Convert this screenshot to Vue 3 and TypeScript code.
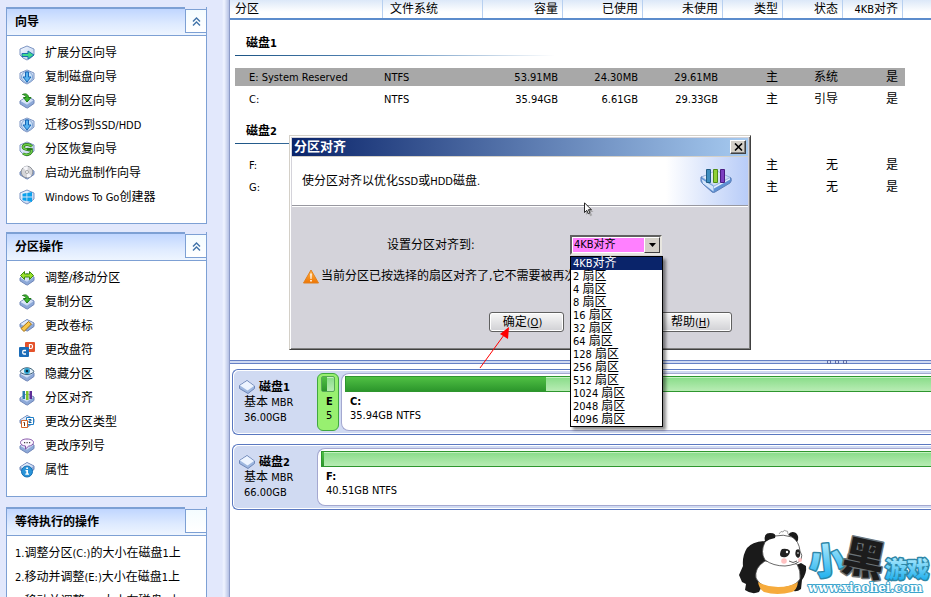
<script setup lang="ts">
import { h, ref } from 'vue'
import type { FunctionalComponent } from 'vue'

interface Task { icon: string; label: string }
interface Partition { name: string; fs: string; size: string; used: string; free: string; kind: string; state: string; aligned: string; active?: boolean }

// Latin runs are set one size smaller than the Chinese around them.
const Mixed: FunctionalComponent<{ text: string }> = (props) =>
  (props.text.match(/[\x20-\x7e]+|[^\x20-\x7e]+/g) ?? []).map((run) =>
    /[\x20-\x7e]/.test(run) ? h('span', { class: 'latin' }, run) : run,
  )
Mixed.props = ['text']

const panels: { title: string; tasks: Task[] }[] = [
  {
    title: '向导',
    tasks: [
      { icon: 'extend', label: '扩展分区向导' },
      { icon: 'down', label: '复制磁盘向导' },
      { icon: 'copy', label: '复制分区向导' },
      { icon: 'down', label: '迁移OS到SSD/HDD' },
      { icon: 'recover', label: '分区恢复向导' },
      { icon: 'disc', label: '启动光盘制作向导' },
      { icon: 'windows', label: 'Windows To Go创建器' },
    ],
  },
  {
    title: '分区操作',
    tasks: [
      { icon: 'resize', label: '调整/移动分区' },
      { icon: 'copy', label: '复制分区' },
      { icon: 'label', label: '更改卷标' },
      { icon: 'letter', label: '更改盘符' },
      { icon: 'hide', label: '隐藏分区' },
      { icon: 'align', label: '分区对齐' },
      { icon: 'type', label: '更改分区类型' },
      { icon: 'serial', label: '更改序列号' },
      { icon: 'info', label: '属性' },
    ],
  },
]

const pending = ['1.调整分区(C:)的大小在磁盘1上', '2.移动并调整(E:)大小在磁盘1上', '3.移动并调整(C:)大小在磁盘1上']

const columns = ['分区', '文件系统', '容量', '已使用', '未使用', '类型', '状态', '4KB对齐']
const groups: { name: string; rows: Partition[] }[] = [
  {
    name: '磁盘1',
    rows: [
      { name: 'E: System Reserved', fs: 'NTFS', size: '53.91MB', used: '24.30MB', free: '29.61MB', kind: '主', state: '系统', aligned: '是', active: true },
      { name: 'C:', fs: 'NTFS', size: '35.94GB', used: '6.61GB', free: '29.33GB', kind: '主', state: '引导', aligned: '是' },
    ],
  },
  {
    name: '磁盘2',
    rows: [
      { name: 'F:', fs: '', size: '', used: '', free: '', kind: '主', state: '无', aligned: '是' },
      { name: 'G:', fs: '', size: '', used: '', free: '', kind: '主', state: '无', aligned: '是' },
    ],
  },
]

const disks = [
  {
    name: '磁盘1',
    size: '36.00GB',
    volumes: [
      { name: 'E', info: '5', used: '45%', small: true },
      { name: 'C:', info: '35.94GB NTFS', used: '200px', small: false },
    ],
  },
  { name: '磁盘2', size: '66.00GB', volumes: [{ name: 'F:', info: '40.51GB NTFS', used: '2px', small: false }] },
]

const options = ['4KB对齐', ...[2, 4, 8, 16, 32, 64, 128, 256, 512, 1024, 2048, 4096].map((n) => `${n} 扇区`)]
const chosen = ref(options[0])
</script>

<template>
  <div class="app">
    <svg class="defs" aria-hidden="true">
      <defs>
        <linearGradient id="slab" x1="0" y1="0" x2="1" y2="1">
          <stop offset="0" stop-color="#f4f8ff" />
          <stop offset="1" stop-color="#b9cdee" />
        </linearGradient>
        <linearGradient id="sky" x1="0" y1="0" x2="0" y2="1">
          <stop offset="0.1" stop-color="#c4f2ff" />
          <stop offset="0.9" stop-color="#1fb0ee" />
        </linearGradient>
        <linearGradient id="amber" x1="0" y1="0" x2="0" y2="1">
          <stop offset="0" stop-color="#ffb54a" />
          <stop offset="1" stop-color="#ef7400" />
        </linearGradient>
        <symbol id="base" viewBox="0 0 16 16">
          <path d="M1 7 8 2.5 15 6v3.5L8.5 14 7 13.6 1 9.8z" fill="#8da9d8" stroke="#6f86b8" />
          <path d="M1.500 7 8 3l6.500 3.200L8 10.800z" fill="url(#slab)" />
        </symbol>
        <symbol id="cube" viewBox="0 0 16 16">
          <path d="M1 4 8 1l7 3v6l-3.500 3L8 15l-4-2-3-3z" fill="url(#slab)" stroke="#7d95c3" />
        </symbol>
      </defs>
    </svg>

    <aside class="sidebar">
      <section v-for="panel in panels" :key="panel.title" class="panel">
        <header class="panel-head">
          <h2>{{ panel.title }}</h2>
          <button class="fold" type="button" :aria-label="panel.title">
            <svg viewBox="0 0 9 9" width="9" height="9"><path d="M1 4.500 4.500 1 8 4.500M1 8.500 4.500 5 8 8.500" fill="none" stroke="#3f72a8" stroke-width="1.400" /></svg>
          </button>
        </header>
        <ul class="tasks">
          <li v-for="task in panel.tasks" :key="task.label">
            <a href="#" class="task">
              <svg class="icon" viewBox="0 0 16 16" width="16" height="16">
                <template v-if="task.icon === 'extend'">
                  <use href="#cube" />
                  <path d="M3 8.500h6V6l6 4-6 4v-2.500H3z" fill="#3fd98a" stroke="#1a6fb0" />
                </template>
                <template v-else-if="task.icon === 'down'">
                  <use href="#cube" />
                  <circle cx="8" cy="8" r="5.500" fill="#cfe3f8" stroke="#7fa4d4" />
                  <path d="M6.500 3h3v5H12l-4 5-4-5h2.500z" fill="#58b4f0" stroke="#1767b8" />
                </template>
                <template v-else-if="task.icon === 'copy'">
                  <use href="#base" y="1" />
                  <path d="M3.500 1.500C7 0 9.500 1.500 9.500 4.500H12L8 9 4.500 4.500H7C7 2.500 5.500 1.800 3.500 1.500z" fill="#3cb62c" stroke="#1c7a14" />
                </template>
                <template v-else-if="task.icon === 'recover'">
                  <use href="#cube" />
                  <path d="M13 5.500C10 2.500 4.500 3 4 6c0 2.500 4 2.500 7 3" fill="none" stroke="#2a7a1a" stroke-width="2.800" />
                  <path d="M13 5.500C10 2.500 4.500 3 4 6c0 2.500 4 2.500 7 3" fill="none" stroke="#6fcf48" stroke-width="1.400" />
                  <path d="M4 12.500c3 2 7 1.500 8.500-1.500V8.500L8 8" fill="none" stroke="#2a7a1a" stroke-width="2.600" />
                  <path d="M4 12.500c3 2 7 1.500 8.500-1.500V9" fill="none" stroke="#6fcf48" stroke-width="1.300" />
                </template>
                <template v-else-if="task.icon === 'disc'">
                  <use href="#base" />
                  <circle cx="8" cy="7" r="5.800" fill="#d5d5d8" stroke="#90949c" />
                  <path d="M8 7 4 2.500A6 6 0 0 1 9 1.500zM8 7l4.500 3.800A6 6 0 0 1 8 12.500z" fill="#f6f6fa" />
                  <circle cx="8" cy="7" r="1.500" fill="#fff" stroke="#888" stroke-width=".7" />
                </template>
                <template v-else-if="task.icon === 'windows'">
                  <use href="#cube" />
                  <path d="M3.500 4.800 7.500 4v3.600h-4zM8.300 3.900 13 3v4.600H8.300zM3.500 8.400h4V12l-4-.8zM8.300 8.400H13V13l-4.700-.9z" fill="#0aa0ec" />
                </template>
                <template v-else-if="task.icon === 'resize'">
                  <use href="#base" y="1" />
                  <path d="M1.500 5.500 5.500 1.500V4h5V1.500l4 4-4 4V7h-5v2.500z" fill="#9be02c" stroke="#3c8c10" />
                </template>
                <template v-else-if="task.icon === 'label'">
                  <use href="#base" y="-1" />
                  <path d="M2 10.500 9.500 3.500l3 2.500L5 13.500z" fill="#f8c64a" stroke="#a56f10" />
                </template>
                <template v-else-if="task.icon === 'letter'">
                  <rect x="6" y="0" width="10" height="10" rx="1" fill="#e4532c" />
                  <path d="M10.500 2.500v4h1.500c2 0 2-4 0-4z" fill="none" stroke="#fff" stroke-width="1.200" />
                  <rect x="0" y="5" width="10" height="10" rx="1" fill="#1b6cb8" />
                  <path d="M7 8.500H4.800c-1.500 0-1.500 3.500 0 3.500H7" fill="none" stroke="#fff" stroke-width="1.300" />
                </template>
                <template v-else-if="task.icon === 'hide'">
                  <use href="#base" y="1" />
                  <path d="M1 5.500C4 .5 12 .5 15 5.500 12 9.500 4 9.500 1 5.500z" fill="#e4f1fa" stroke="#3d6076" />
                  <circle cx="8" cy="5" r="3" fill="#2aa0cf" />
                  <circle cx="8" cy="5" r="1.300" fill="#0b2836" />
                </template>
                <template v-else-if="task.icon === 'align'">
                  <use href="#base" y="1" />
                  <path d="M3.500 1H6v8H3.500z" fill="#2b7cae" />
                  <path d="M7 1h2.500v9H7z" fill="#7fc52a" />
                  <path d="M10.500 1H13v8h-2.500z" fill="#5f2f98" />
                </template>
                <template v-else-if="task.icon === 'type'">
                  <use href="#base" y="-1" />
                  <path d="M7.500 3.500h7v7h-7z" fill="#fff" stroke="#2080c8" />
                  <path d="M9.500 5.500h2.500v1.500H10v1.500h2.500" fill="none" stroke="#1060a0" />
                  <path d="M2.500 6.500h6v7h-6z" fill="#fff" stroke="#d6632c" />
                  <path d="M4.500 8.500h1v3.500" fill="none" stroke="#7a3010" />
                </template>
                <template v-else-if="task.icon === 'serial'">
                  <use href="#base" y="1" />
                  <path d="M8 1c4 0 6.500 1.500 6.500 3.500S12 8 9.500 8.200L6.500 11V8C3.500 7.800 1.500 6.500 1.500 4.500S4 1 8 1z" fill="#fbf7ff" stroke="#8452a8" />
                  <path d="M5 4h1.200v1.200H5zM7.500 4h1.200v1.200H7.500zM10 4h1.200v1.200H10z" fill="#444" />
                </template>
                <template v-else>
                  <use href="#base" y="-2" />
                  <circle cx="8" cy="9.500" r="5.500" fill="#2a94d8" stroke="#1570b4" />
                  <path d="M7.200 5.500h1.800v1.600H7.200zM6.500 8H9v3.500h1v1.300H6.300v-1.300h1V9.200h-.8z" fill="#fff" />
                </template>
              </svg>
              <span><Mixed :text="task.label" /></span>
            </a>
          </li>
        </ul>
      </section>

      <section class="panel queue">
        <header class="panel-head">
          <h2>等待执行的操作</h2>
          <span class="fold"></span>
        </header>
        <ol class="tasks pending">
          <li v-for="item in pending" :key="item"><Mixed :text="item" /></li>
        </ol>
      </section>
    </aside>

    <main class="main">
      <div class="list">
        <table>
          <colgroup>
            <col class="c-name" /><col class="c-fs" /><col class="c-size" /><col class="c-size" /><col class="c-size" />
            <col class="c-flag" /><col class="c-flag" /><col class="c-last" />
          </colgroup>
          <thead>
            <tr><th v-for="c in columns" :key="c" scope="col"><Mixed :text="c" /></th></tr>
          </thead>
          <tbody v-for="g in groups" :key="g.name">
            <tr class="group"><th colspan="8" scope="rowgroup"><div><Mixed :text="g.name" /></div></th></tr>
            <tr v-for="r in g.rows" :key="r.name" class="row" :class="{ active: r.active }">
              <td><Mixed :text="r.name" /></td>
              <td><Mixed :text="r.fs" /></td>
              <td><Mixed :text="r.size" /></td>
              <td><Mixed :text="r.used" /></td>
              <td><Mixed :text="r.free" /></td>
              <td>{{ r.kind }}</td>
              <td>{{ r.state }}</td>
              <td>{{ r.aligned }}</td>
            </tr>
          </tbody>
        </table>
      </div>

      <div class="splitter"><i></i><i></i><i></i></div>

      <div class="map">
        <section v-for="d in disks" :key="d.name" class="disk">
          <div class="disk-info">
            <h3>
              <svg viewBox="0 0 18 16" width="18" height="16">
                <path d="M1.500 6.500 9 1.500l7.500 5.500v2.500L10 14.500 1.500 9.500z" fill="#9fb8e0" stroke="#7088b8" />
                <path d="M2 6.500 9 2l7 5-6.500 4.500z" fill="#edf4ff" />
              </svg>
              <span><Mixed :text="d.name" /></span>
            </h3>
            <p><Mixed text="基本 MBR" /></p>
            <p><Mixed :text="d.size" /></p>
          </div>
          <div v-for="v in d.volumes" :key="v.name" class="volume" :class="{ small: v.small }">
            <div class="bar"><span :style="{ width: v.used }"></span></div>
            <strong><Mixed :text="v.name" /></strong>
            <p><Mixed :text="v.info" /></p>
          </div>
        </section>
      </div>
    </main>

    <section class="dialog" role="dialog" aria-labelledby="dialog-title">
      <header class="titlebar">
        <h2 id="dialog-title">分区对齐</h2>
        <button type="button" class="close" aria-label="×">
          <svg viewBox="0 0 9 8" width="9" height="8"><path d="M1 .5 8 7.500M8 .5 1 7.500" stroke="#000" stroke-width="1.600" /></svg>
        </button>
      </header>
      <div class="banner">
        <p><Mixed text="使分区对齐以优化SSD或HDD磁盘." /></p>
        <svg viewBox="0 0 32 26" width="32" height="26">
          <path d="M1 9Q0 14 3 16l9 8q1.500 1 3 0l15-9q2-2 1-5L18 4z" fill="#5f92d4" stroke="#5d7fb8" />
          <path d="M2 9 16 2.500 30 9.500 14 18z" fill="url(#slab)" stroke="#9db9e2" stroke-width=".8" />
          <path d="M1.500 11l12 7.500v5L3 15.500z" fill="#d4e5fa" />
          <path d="M14 18.500 30 10v1.500L14 20.500z" fill="#e4effc" />
          <path d="M6.500 1.500h4v13h-4z" fill="#3e8dbf" stroke="#1f5c85" />
          <path d="M13.500 1.500h4v13h-4z" fill="#8fd036" stroke="#4d8a14" />
          <path d="M20.500 1.500h4v13h-4z" fill="#7d3fc0" stroke="#4a1b80" />
        </svg>
      </div>
      <form class="form" @submit.prevent>
        <div class="field">
          <label for="sector">设置分区对齐到:</label>
          <div class="combo">
            <select id="sector" v-model="chosen">
              <option v-for="o in options" :key="o">{{ o }}</option>
            </select>
            <span class="arrow"><svg viewBox="0 0 7 4" width="7" height="4"><path d="M0 0h7L3.500 4z" /></svg></span>
            <ul class="menu" role="listbox">
              <li v-for="o in options" :key="o" role="option" :aria-selected="o === chosen" :class="{ on: o === chosen }" @click="chosen = o"><Mixed :text="o" /></li>
            </ul>
          </div>
        </div>
        <p class="notice">
          <svg viewBox="0 0 16 15" width="16" height="15">
            <path d="M8 1 15.500 14H.5z" fill="url(#amber)" stroke="#e08020" stroke-linejoin="round" />
            <path d="M7.200 4.500h1.600L8.500 10h-1zM7.200 11h1.600v1.600H7.200z" fill="#fff" />
          </svg>
          <span>当前分区已按选择的扇区对齐了,它不需要被再次</span>
        </p>
        <div class="actions">
          <button type="submit">确定<span class="latin">(<u>O</u>)</span></button>
          <button type="button">帮助<span class="latin">(<u>H</u>)</span></button>
        </div>
      </form>
    </section>

    <svg class="pointer" viewBox="0 0 10 15" width="10" height="15">
      <path d="M2 2.500v10.500l2.500-2.200 1.800 3.500 2-1-1.800-3.300h3z" fill="#888" opacity=".6" />
      <path d="M.5.800v9.700L2.800 8.300l1.500 3.400 1.600-.8L4.400 7.700h3z" fill="#fff" stroke="#111" stroke-width=".9" />
    </svg>
    <svg class="callout" viewBox="0 0 32 42" width="32" height="42">
      <path d="M1 40 25 7" stroke="#f00" />
      <path d="M30 -1 29 11 21 6z" fill="#f00" />
    </svg>

    <svg class="mark" viewBox="0 0 193 69" width="193" height="69">
      <path d="M27 13Q14 14 9 20 4 28 5 38l-4 9 3 7 4 2-1 6q7 5 14 2l4-8 8-30z" fill="#1a1a1a" />
      <path d="M56 38l7-3 5 3q1 7-4 14l-1 9q-5 4-10 1z" fill="#1a1a1a" />
      <path d="M27 33Q16 40 18 50q4 10 21 10 18 0 23-9 1-8-3-15z" fill="#fff" stroke="#444" stroke-width=".8" />
      <path d="M20 54q9 5 20 5 12 0 20-5-1 8-6 10-15 4-28 0-5-3-6-10z" fill="#f6ab3c" />
      <path d="M27 14Q22 24 27 32q8 6 20 6 11-1 16-6 2-5-1-9Q61 13 54 9q-9-3-17-1-7 2-10 6z" fill="#fff" stroke="#444" stroke-width=".8" />
      <path d="M27 14q-2-9 5-9 7 0 5 5-6 1-10 4z" fill="#1a1a1a" />
      <path d="M50 7q3-5 8-2 4 4 1 9-3-5-9-7z" fill="#1a1a1a" />
      <path d="M41 6q2-4 4-2 1-3 3-1 2-1 2 3" fill="none" stroke="#888" stroke-width=".8" />
      <path d="M44 21q6-1 8 2 0 4-4 6-6 1-6-3 0-3 2-5z" fill="#222" />
      <path d="M58 22q4-2 4 2 1 5-2 6-4-2-2-8z" fill="#222" />
      <circle cx="49" cy="24" r="1.200" fill="#fff" />
      <circle cx="60" cy="25" r=".8" fill="#fff" />
      <path d="M51 33q4 3 8 0" fill="none" stroke="#333" stroke-width=".8" />
      <circle cx="46" cy="33" r="2.800" fill="#ffc2c2" />
      <circle cx="62" cy="32" r="2" fill="#ffc2c2" />
      <g class="brand">
        <text x="71" y="46" font-size="36" transform="rotate(-6 88 35)" fill="url(#sky)" stroke="#2e87a8">小</text>
        <text x="105" y="46" font-size="42" transform="rotate(12 126 30)" fill="#1c1c1c" stroke="#6c7478">黑</text>
        <text x="147" y="49" font-size="22" fill="url(#sky)" stroke="#2e87a8">游戏</text>
      </g>
      <text class="url" x="70" y="64" fill="#fff" stroke="#3ba4cc">www.xiaohei.com</text>
    </svg>
  </div>
</template>

<style>
body {
  margin: 0;
  background: #fff;
}
.latin {
  font-size: 11px;
  line-height: 0;
}
</style>

<style scoped>
* {
  box-sizing: border-box;
}
.app {
  position: relative;
  display: grid;
  grid-template-columns: 230px minmax(0, 1fr);
  height: 100vh;
  overflow: hidden;
  font: 12px/16px 'DejaVu Sans Condensed', 'Noto Sans CJK SC', sans-serif;
  color: #000;
}
h2, h3, p, ul, ol {
  margin: 0;
  padding: 0;
  font-size: 12px;
  list-style: none;
}
p {
  white-space: nowrap;
}
.defs {
  position: absolute;
  width: 0;
  height: 0;
}

/* task panels */
.sidebar {
  display: flex;
  flex-direction: column;
  gap: 8px;
  padding: 7px 22px 0 6px;
  overflow: hidden;
  background: linear-gradient(90deg, transparent 222px, #f0f4ff 224px, #b4c0e4 229px) #e2e8fc;
  border-right: 1px solid #8e9cc8;
}
.panel {
  flex: none;
  background: #fff;
  border: 1px solid #7da0d4;
  border-top: 0;
}
.queue {
  margin-top: 2px;
}
.panel-head {
  display: flex;
  align-items: center;
  height: 29px;
  margin: 0 -1px;
  border: 1px solid #7da0d4;
  border-top: 0;
  background: linear-gradient(#e2e8fc 2px, #f6fcff 2px, #eef6ff);
}
.panel-head h2 {
  flex: 1;
  height: 28px;
  padding-left: 8px;
  line-height: 27px;
  border-top: 2px solid #7da0d4;
  background: linear-gradient(#c0d6ff, #dfebff 60%, #eef5ff);
}
.fold {
  display: flex;
  align-items: center;
  justify-content: center;
  width: 22px;
  height: 24px;
  margin: 0 -1px 0 0;
  padding: 0;
  border: 1px solid #7da0d4;
  background: linear-gradient(#f4fcff, #fff);
}
.tasks {
  padding: 5px 0 14px 12px;
}
.tasks li {
  height: 24px;
  line-height: 24px;
  white-space: nowrap;
}
.task {
  display: flex;
  align-items: center;
  gap: 10px;
  height: 24px;
  color: inherit;
  text-decoration: none;
}
.tasks.pending {
  padding-left: 8px;
}

/* partition list */
.main {
  display: flex;
  flex-direction: column;
  min-width: 0;
}
.list {
  flex: 1;
  padding-left: 5px;
  overflow: hidden;
  background: linear-gradient(#dce8f8, #fff 12px, #fff 18px, #5c8ccc 18px, #5c8ccc 20px, transparent 20px) 0 0 / 100% 20px no-repeat;
}
table {
  width: 670px;
  table-layout: fixed;
  border-spacing: 0;
}
.c-name { width: 148px; }
.c-fs { width: 100px; }
.c-size { width: 80px; }
.c-flag { width: 60px; }
.c-last { width: 62px; }
th, td {
  padding: 0 5px 0 0;
  text-align: right;
  font-weight: normal;
  white-space: nowrap;
}
thead th {
  height: 20px;
  padding-bottom: 2px;
  line-height: 18px;
  background: linear-gradient(#b8d0f0, #b8d0f0) right 0 top 0 / 1px 18px no-repeat;
}
thead th:last-child {
  padding-right: 7px;
  background-position: right 2px top 0;
}
thead th:first-child, td:first-child, td:nth-child(2) {
  text-align: left;
}
thead th:nth-child(2) {
  padding-left: 7px;
  text-align: left;
}
.group th {
  height: 44px;
  padding: 10px 0 0;
  text-align: left;
  vertical-align: top;
}
.group div {
  height: 24px;
  padding-left: 11px;
  line-height: 22px;
  font-weight: bold;
  background: linear-gradient(90deg, #1c5484, #5c8cbc 150px, transparent 320px) 0 100% / 100% 1px no-repeat;
}
tbody:nth-of-type(1) .group th {
  height: 46px;
  padding-top: 12px;
}
.row td {
  height: 22px;
  border: solid transparent;
  border-width: 2px 0;
  line-height: 18px;
  background-clip: padding-box;
}
.row td:first-child {
  padding-left: 14px;
}
.row td:nth-child(2) {
  padding-left: 1px;
}
.row td:last-child {
  padding-right: 7px;
}
.active td {
  background-color: #a8a8a8;
}

/* disk map */
.splitter {
  display: flex;
  justify-content: center;
  gap: 4px;
  height: 4px;
  padding-left: 512px;
  border: solid #6680c4;
  border-width: 1px 0;
  background: #d0daf2;
}
.splitter i {
  width: 4px;
  height: 4px;
  margin-top: -1px;
  border: 1px solid #5c6ca8;
}
.map {
  flex: none;
  height: 233px;
  padding: 5px 0 0 2px;
  overflow: hidden;
}
.disk {
  display: flex;
  gap: 2px;
  height: 66px;
  margin-bottom: 9px;
  padding: 3px 0 3px 6px;
  border: 1px solid #5a78c0;
  border-right: 0;
  border-radius: 6px 0 0 6px;
  background: #d0daf2;
  box-shadow: inset 1px 1px #fff, inset 0 -1px #fff;
}
.disk-info {
  width: 76px;
  padding: 6px 0 0 5px;
  line-height: 15px;
}
.disk-info h3 {
  display: flex;
  align-items: center;
  gap: 3px;
  margin-left: -6px;
  height: 16px;
}
.volume {
  flex: 1;
  min-width: 0;
  padding: 2px 0 0 3px;
  line-height: 14px;
  border: 1px solid #a4a8d0;
  border-right: 0;
  border-radius: 8px 0 0 8px;
  background: #fff;
  overflow: hidden;
}
.volume strong, .volume p {
  display: block;
  margin-left: 5px;
}
.bar {
  height: 16px;
  margin-bottom: 2px;
  border: 1px solid #2e962e;
  border-right: 0;
  background: linear-gradient(#88dc88, #b8ecb4);
  box-shadow: inset 0 1px #c4f2c0;
}
.bar span {
  display: block;
  height: 100%;
  background: linear-gradient(#50c044, #2c962c);
}
.volume.small {
  flex: 0 0 22px;
  padding: 2px 3px 0;
  border: 1px solid #40a840;
  border-radius: 6px;
  background: #98f070;
}
.small .bar {
  border: 1px solid #58a858;
  border-radius: 2px;
}

/* dialog */
.dialog {
  position: absolute;
  top: 135px;
  left: 289px;
  width: 462px;
  padding: 2px;
  border: 1px solid;
  border-color: #d4d0c8 #404040 #404040 #d4d0c8;
  box-shadow: inset 1px 1px #fff, inset -1px -1px #808080;
  background: #d4d3da;
}
.titlebar {
  display: flex;
  align-items: center;
  justify-content: space-between;
  height: 18px;
  padding: 0 2px;
  background: linear-gradient(90deg, #0a246a, #a6caf0);
  color: #fff;
}
.titlebar h2 {
  font-size: 13px;
}
.close {
  display: flex;
  align-items: center;
  justify-content: center;
  width: 16px;
  height: 14px;
  padding: 0;
  border: 1px solid;
  border-color: #fff #404040 #404040 #fff;
  box-shadow: inset -1px -1px #808080;
  background: #d4d0c8;
}
.banner {
  display: flex;
  align-items: center;
  justify-content: space-between;
  height: 50px;
  padding: 0 16px 0 10px;
  border-top: 1px solid #d4d0c8;
  border-bottom: 1px solid #9898a0;
  background: linear-gradient(90deg, transparent 82%, #b8ccf8) #fff;
}
.form {
  padding: 28px 16px 15px 11px;
  border-top: 1px solid #fff;
}
.field {
  display: flex;
  align-items: center;
  padding-left: 84px;
}
.field label {
  width: 183px;
}
.combo {
  position: relative;
  width: 92px;
  height: 20px;
}
.combo select {
  display: block;
  appearance: none;
  width: 92px;
  height: 20px;
  padding: 0 0 0 2px;
  border: 2px solid;
  border-color: #606060 #e8e6e0 #e8e6e0 #606060;
  border-radius: 0;
  outline: 0;
  background: #ff80ff;
  box-shadow: inset 0 0 0 1px #fff;
  font: inherit;
  font-size: 11px;
  color: #000;
}
.arrow {
  position: absolute;
  top: 2px;
  right: 2px;
  display: flex;
  align-items: center;
  justify-content: center;
  width: 16px;
  height: 16px;
  border: 1px solid;
  border-color: #fff #404040 #404040 #fff;
  background: #d4d0c8;
  pointer-events: none;
}
.menu {
  position: absolute;
  top: 21px;
  left: 0;
  width: 93px;
  border: 1px solid #000;
  background: #fff;
  box-shadow: 3px 3px 3px rgb(0 0 0 / 45%);
  line-height: 13px;
}
.menu li {
  height: 13px;
  padding-left: 2px;
  white-space: nowrap;
}
.menu .on {
  background: #0a246a;
  color: #fff;
}
.notice {
  display: flex;
  align-items: center;
  gap: 2px;
  margin-top: 13px;
}
.actions {
  display: flex;
  justify-content: flex-end;
  gap: 93px;
  margin-top: 28px;
}
.actions button {
  width: 75px;
  height: 20px;
  padding: 0 8px 0 0;
  border: 1px solid #606060;
  border-radius: 3px;
  background: linear-gradient(#f8f8f8, #e4e4e6 50%, #d0d0d4);
  box-shadow: inset 0 0 0 1px #fff;
  font: inherit;
  color: #000;
}

/* things that float above the window */
.pointer {
  position: absolute;
  top: 202px;
  left: 584px;
}
.callout {
  position: absolute;
  top: 328px;
  left: 479px;
  overflow: visible;
}
.mark {
  position: absolute;
  right: 0;
  bottom: 0;
}
.brand text {
  font-family: 'Noto Sans CJK SC', sans-serif;
  font-weight: 900;
  stroke-width: 3px;
  stroke-linejoin: round;
  paint-order: stroke;
}
.url {
  font: bold 12px 'DejaVu Serif', serif;
  stroke-width: 2px;
  stroke-linejoin: round;
  paint-order: stroke;
}
</style>
